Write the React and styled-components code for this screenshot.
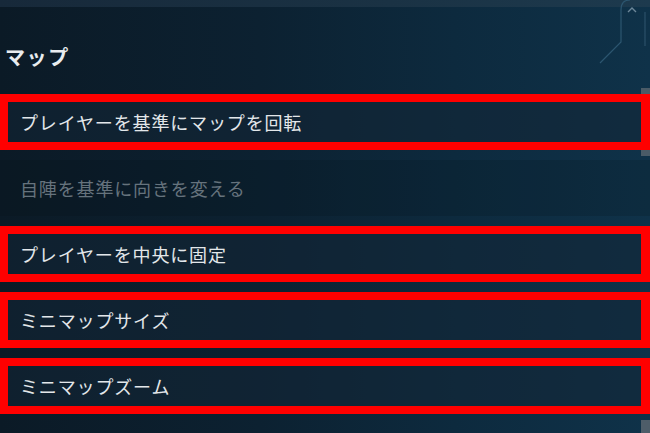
import React from 'react';
import styled, { createGlobalStyle } from 'styled-components';

const GlobalStyle = createGlobalStyle`
	html, body {
		margin: 0;
		padding: 0;
		background: #0c1c29;
	}
	body {
		font-family: "Noto Sans CJK JP", "Noto Sans", sans-serif;
	}
`;

const options = [
	{ label: 'プレイヤーを基準にマップを回転', marked: true },
	{ label: '自陣を基準に向きを変える', disabled: true },
	{ label: 'プレイヤーを中央に固定', marked: true },
	{ label: 'ミニマップサイズ', marked: true },
	{ label: 'ミニマップズーム', marked: true },
];

const MapSettings = () => {
	return (
		<Panel>
			<TopBar />
			<Header>
				<Title>マップ</Title>
			</Header>
			<List>
				{options.map((o) => (
					<Row key={o.label} $marked={o.marked}>
						<Label $disabled={o.disabled}>{o.label}</Label>
					</Row>
				))}
			</List>
			<ScrollThumb />
			<ScrollFoot />
			<Frame viewBox="0 0 60 70" width="60" height="70">
				<path
					d="M10 63 L31 42 L31 10 Q31 0 40 0"
					fill="none"
					stroke="#2c5670"
					strokeWidth="1.2"
				/>
				<path d="M55 12 L55 46" fill="none" stroke="#2a5069" strokeWidth="1.2" />
				<path d="M38 12 L42 8 L46 12" fill="none" stroke="#6d8799" strokeWidth="1.4" />
			</Frame>
		</Panel>
	);
};

const Panel = styled.div`
	position: relative;
	width: 650px;
	height: 433px;
	overflow: hidden;
	background: linear-gradient(90deg, #0b1a26 0%, #0c2131 40%, #0d2a3e 70%, #0f3249 100%);
`;

const TopBar = styled.div`
	height: 7px;
	background: linear-gradient(90deg, #17293a 0%, #1a3244 60%, #1d3a4e 100%);
`;

const Header = styled.div`
	height: 87px;
	display: flex;
	align-items: center;
	padding: 12px 0 0 5px;
	box-sizing: border-box;
`;

const Title = styled.h2`
	margin: 0;
	font-size: 20px;
	font-weight: 700;
	letter-spacing: 1.6px;
	color: #e8ecef;
	line-height: 1;
`;

const List = styled.div`
	display: flex;
	flex-direction: column;
	gap: 10px;
`;

const Row = styled.div`
	position: relative;
	z-index: 1;
	height: 56px;
	box-sizing: border-box;
	display: flex;
	align-items: center;
	padding-left: ${(p) => (p.$marked ? '12px' : '20px')};
	border: ${(p) => (p.$marked ? '8px solid #ff0000' : 'none')};
	border-right-width: ${(p) => (p.$marked ? '9px' : '0')};
	background: ${(p) =>
		p.$marked ? 'rgba(20, 38, 54, 0.55)' : 'rgba(4, 14, 22, 0.18)'};
`;

const Label = styled.span`
	font-size: 18px;
	letter-spacing: 0.85px;
	line-height: 1;
	color: ${(p) => (p.$disabled ? '#66737d' : '#e3e7ea')};
`;

const ScrollThumb = styled.div`
	position: absolute;
	right: 0;
	top: 88px;
	width: 9px;
	height: 68px;
	background: #4a5b67;
`;

const ScrollFoot = styled.div`
	position: absolute;
	right: 0;
	bottom: 0;
	width: 9px;
	height: 13px;
	background: #4e5d69;
`;

const Frame = styled.svg`
	position: absolute;
	right: 0;
	top: 0;
`;

export default function App() {
	return (
		<>
			<GlobalStyle />
			<MapSettings />
		</>
	);
}
